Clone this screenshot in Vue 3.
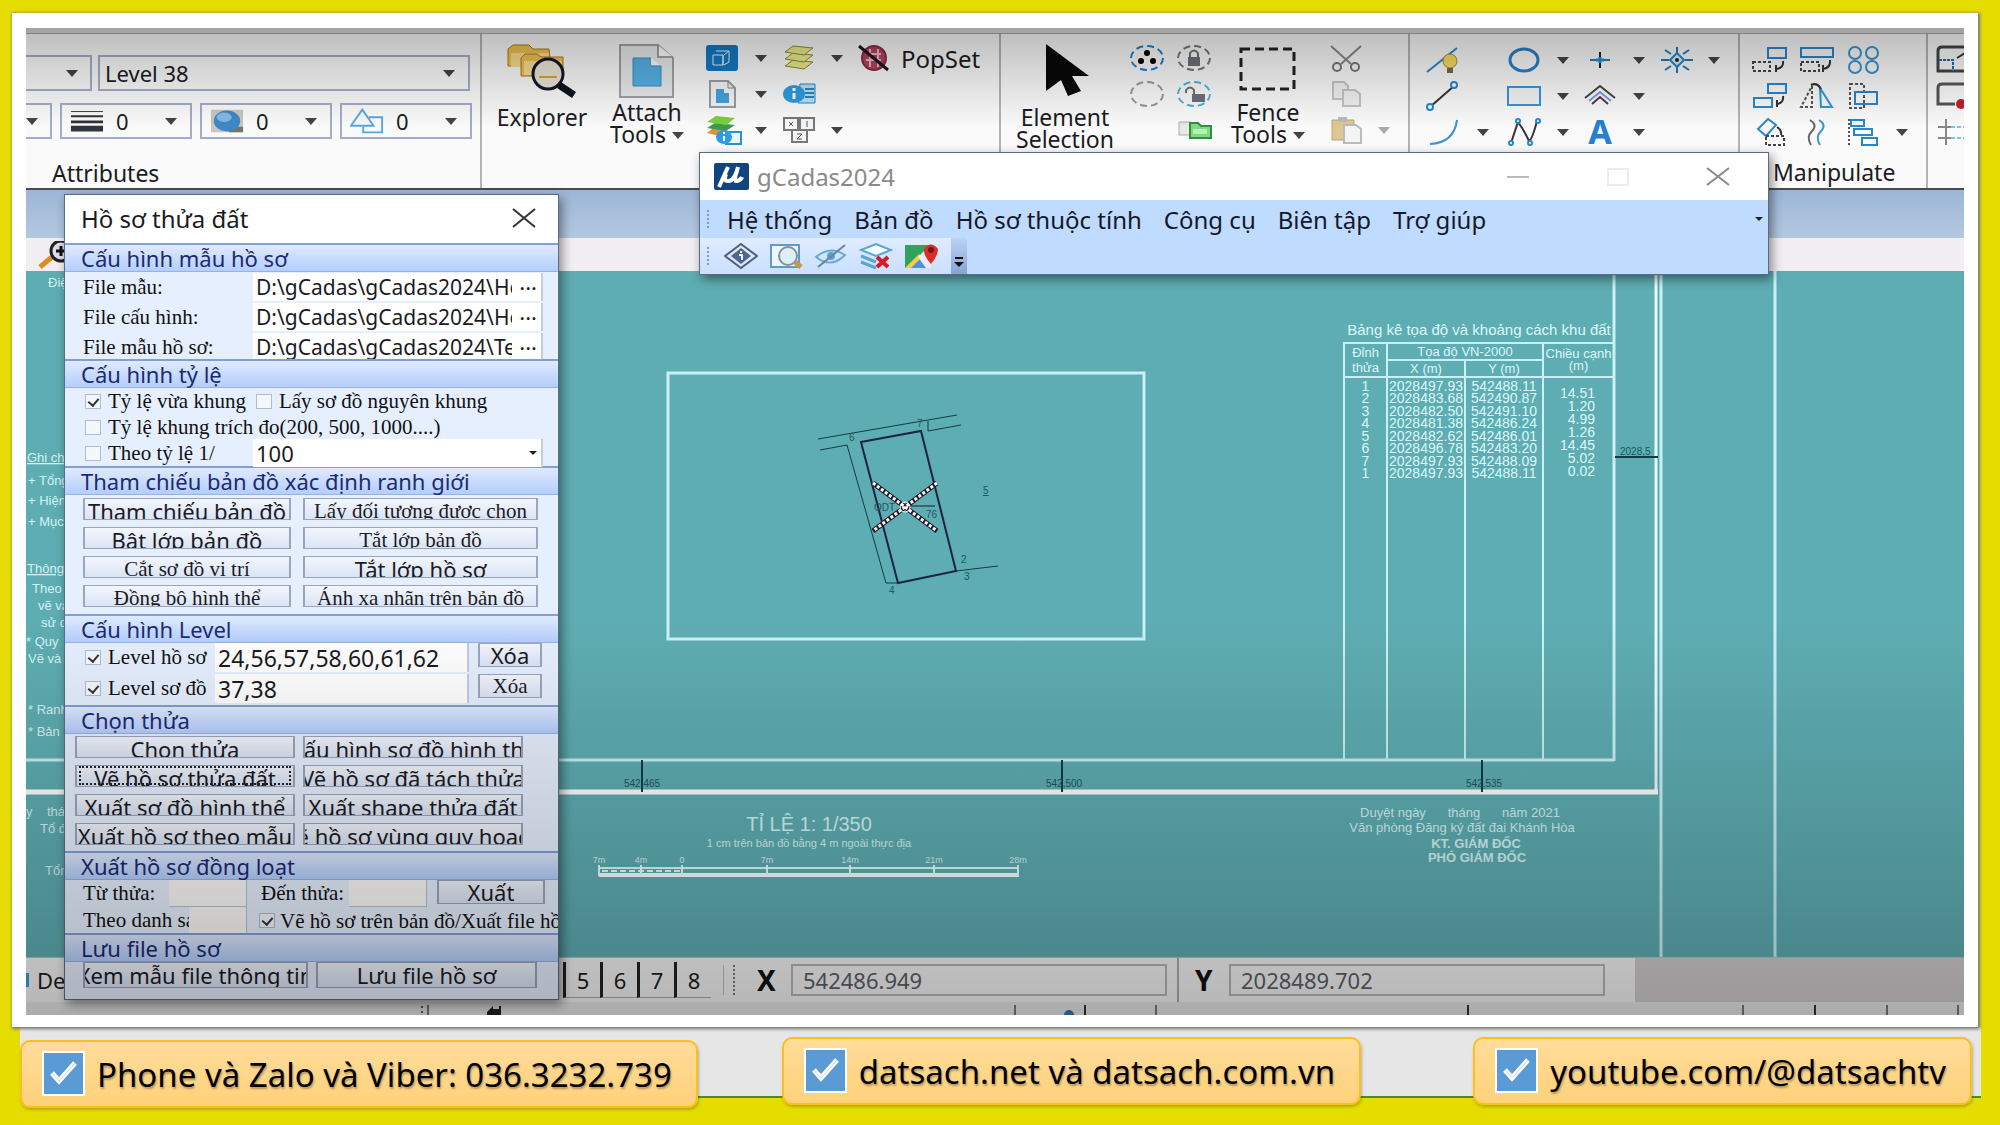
<template>
  <div class="page">
    <main class="frame">
      <div class="app">
        <div class="strip"></div>
        <header class="ribbon">
          <section class="group attributes">
            <div class="combos">
              <label class="combo cut wide"><span class="arr"></span></label>
              <label class="combo level">
                <select aria-label="Level"><option>Level 38</option></select>
                <span class="arr"></span>
              </label>
            </div>
            <div class="combos second">
              <label class="combo cut"><span class="arr"></span></label>
              <label v-for="c in smallCombos" :key="c" class="combo small">
                <svg viewBox="0 0 36 28" v-html="icons[c]"></svg>
                <select :aria-label="c"><option>0</option></select>
                <span class="arr"></span>
              </label>
            </div>
            <h2>Attributes</h2>
          </section>

          <section class="group primary">
            <button class="big explorer">
              <svg viewBox="0 0 70 54" v-html="icons.explorer"></svg>
              <span>Explorer</span>
            </button>
            <button class="big attach">
              <svg viewBox="0 0 70 54" v-html="icons.attach"></svg>
              <span class="tight">Attach<br>Tools <i class="arr"></i></span>
            </button>
            <div class="tools primary-grid">
              <template v-for="(t, i) in primaryTools" :key="i">
                <button v-if="t && t !== 'arr'" class="tool"><svg viewBox="0 0 32 32" v-html="icons[t]"></svg></button>
                <i v-else-if="t" class="arr"></i>
                <i v-else></i>
              </template>
            </div>
            <button class="popset"><svg viewBox="0 0 32 32" v-html="icons.popset"></svg>PopSet</button>
          </section>

          <section class="group selection">
            <button class="big element">
              <svg viewBox="0 0 70 54" v-html="icons.cursor"></svg>
              <span>Element<br>Selection</span>
            </button>
            <div class="tools pair-grid">
              <template v-for="(t, i) in selectTools" :key="i">
                <button v-if="t" class="tool"><svg viewBox="0 0 36 32" v-html="icons[t]"></svg></button>
                <i v-else></i>
              </template>
            </div>
            <button class="big fence">
              <svg viewBox="0 0 70 54" v-html="icons.fence"></svg>
              <span class="tight">Fence<br>Tools <i class="arr"></i></span>
            </button>
            <div class="tools clip-grid">
              <button class="tool"><svg viewBox="0 0 32 32" v-html="icons.cut"></svg></button><i></i>
              <button class="tool"><svg viewBox="0 0 32 32" v-html="icons.copy"></svg></button><i></i>
              <button class="tool"><svg viewBox="0 0 32 32" v-html="icons.paste"></svg></button><i class="arr dim"></i>
            </div>
          </section>

          <section class="group placement">
            <div class="tools place-grid">
              <template v-for="(t, i) in placeTools" :key="i">
                <button v-if="t && t !== 'arr'" class="tool"><svg viewBox="0 0 32 32" v-html="icons[t]"></svg></button>
                <i v-else-if="t" class="arr"></i>
                <i v-else></i>
              </template>
            </div>
          </section>

          <section class="group manipulate">
            <div class="tools manip-grid">
              <template v-for="(t, i) in manipTools" :key="i">
                <button v-if="t && t !== 'arr'" class="tool"><svg viewBox="0 0 36 32" v-html="icons[t]"></svg></button>
                <i v-else-if="t" class="arr"></i>
                <i v-else></i>
              </template>
            </div>
            <h2>Manipulate</h2>
          </section>

          <section class="group modify">
            <div class="tools">
              <button v-for="t in ['mod1', 'mod2', 'mod3']" :key="t" class="tool"><svg viewBox="0 0 32 32" v-html="icons[t]"></svg></button>
            </div>
          </section>
        </header>

        <div class="docbar"></div>
        <div class="viewbar"><svg viewBox="0 0 32 28" v-html="icons.zoom"></svg></div>

        <div class="map">
          <svg class="drawing" viewBox="26 271 1938 686" preserveAspectRatio="xMinYMin slice">
            <g fill="none" stroke="#c9f1f5">
              <rect x="668" y="373" width="476" height="266" stroke-width="3" />
              <path d="M26 760H1614" stroke-width="3" />
              <path d="M1614 271V761M1661 271V957M1775 271V957" stroke-width="3" />
              <path d="M1656 271V792" stroke-width="3" stroke="#eafafc" />
              <path d="M26 792H1658" stroke-width="5" stroke="#fff" />
            </g>
            <g stroke="#123c46" stroke-width="2" fill="none">
              <path d="M642 760V792M1062 760V792M1482 760V792M1613 457H1658" />
              <path d="M861 442L921 431L956 571L898 583Z" stroke="#1d2348" />
              <path d="M818 439L957 415M820 450L847 445L886 583H898M928 421V431L961 425M956 571L998 566" stroke-width="1" />
            </g>
            <path d="M873 483L937 531M937 483L873 531" stroke="#221a2c" stroke-width="5" />
            <path d="M873 483L937 531M937 483L873 531" stroke="#fff" stroke-width="3" stroke-dasharray="3 2" />
            <circle cx="905" cy="507" r="5" fill="none" stroke="#fff" />
            <path d="M910 506H935" stroke="#221a2c" />
            <g class="dark">
              <text x="624" y="787">542,465</text>
              <text x="1046" y="787">542,500</text>
              <text x="1466" y="787">542,535</text>
              <text x="1620" y="455">2028,5</text>
              <text x="849" y="441">6</text>
              <text x="917" y="427">7</text>
              <text x="961" y="563">2</text>
              <text x="964" y="580">3</text>
              <text x="889" y="594">4</text>
              <text x="874" y="511">ODT</text>
              <text x="926" y="518">76</text>
              <text x="983" y="494" text-decoration="underline">5</text>
            </g>
            <g class="light">
              <text x="48" y="287">Điện</text>
              <text x="27" y="462" text-decoration="underline">Ghi chú</text>
              <text x="28" y="485">+ Tổng</text>
              <text x="28" y="505">+ Hiện</text>
              <text x="28" y="526">+ Mục</text>
              <text x="27" y="573" text-decoration="underline">Thông</text>
              <text x="32" y="593">Theo</text>
              <text x="38" y="610">vẽ và</text>
              <text x="41" y="627">sử dụ</text>
              <text x="26" y="646">* Quy</text>
              <text x="28" y="663">Vẽ và</text>
              <text x="28" y="714">* Ranh</text>
              <text x="28" y="736">* Bản</text>
              <text x="26" y="816">y</text>
              <text x="47" y="816">tháng</text>
              <text x="40" y="833">Tổ đo</text>
              <text x="45" y="875">Tổng</text>
            </g>
            <g class="light" text-anchor="middle">
              <text x="809" y="831" class="scale-title">TỈ LỆ 1: 1/350</text>
              <text x="809" y="847" class="mini">1 cm trên bản đồ bằng 4 m ngoài thực địa</text>
              <text v-for="s in scaleMarks" :key="s.x" :x="s.x" y="863" class="tiny">{{ s.t }}</text>
              <text x="1393" y="817">Duyệt ngày</text>
              <text x="1464" y="817">tháng</text>
              <text x="1531" y="817">năm 2021</text>
              <text x="1462" y="832">Văn phòng Đăng ký đất đai Khánh Hòa</text>
              <text x="1476" y="848" class="strong">KT. GIÁM ĐỐC</text>
              <text x="1477" y="862" class="strong">PHÓ GIÁM ĐỐC</text>
            </g>
            <path d="M599 868H1019" stroke="#dff" stroke-width="2" />
            <path d="M599 875H1019" stroke="#fff" stroke-width="4" />
            <path d="M602 871H682" stroke="#e8ffff" stroke-width="2" stroke-dasharray="6 3" />
            <path v-for="s in scaleMarks" :key="'m' + s.x" :d="`M${s.x} 865V876`" stroke="#e8ffff" stroke-width="2" />
          </svg>
          <div class="coords">
            <table>
              <caption>Bảng kê tọa độ và khoảng cách khu đất</caption>
              <thead>
                <tr><th rowspan="2">Đỉnh thửa</th><th colspan="2">Tọa độ VN-2000</th><th rowspan="2">Chiều cạnh (m)</th></tr>
                <tr><th>X (m)</th><th>Y (m)</th></tr>
              </thead>
              <tbody>
                <tr v-for="(r, i) in coords" :key="i">
                  <td>{{ r[0] }}</td><td>{{ r[1] }}</td><td>{{ r[2] }}</td>
                  <td v-if="i === 0" class="sides" rowspan="9"><div v-for="(s, j) in sides" :key="j">{{ s }}</div></td>
                </tr>
                <tr class="filler"><td></td><td></td><td></td></tr>
              </tbody>
            </table>
          </div>
        </div>

        <footer class="status">
          <div class="status-main">
            <span class="desc"><i></i>De</span>
            <div class="views"><button v-for="n in [5, 6, 7, 8]" :key="n">{{ n }}</button></div>
            <i class="grip"></i>
            <label class="axis" for="cx">X</label><input id="cx" v-model="x">
            <i class="sep"></i>
            <label class="axis y" for="cy">Y</label><input id="cy" v-model="y">
          </div>
          <div class="status-rest"></div>
        </footer>
        <div class="ticks">
          <svg viewBox="0 0 1938 13" preserveAspectRatio="xMinYMin slice">
            <path d="M402 3V13M989 3V13M1130 3V13M1717 3V13M1861 3V13M1932 3V13" stroke="#777" stroke-width="2" />
            <path d="M1059 3V13M1789 3V13M1442 3V13" stroke="#333" stroke-width="2" />
            <path d="M396 4v2M396 9v2" stroke="#555" stroke-width="2" />
            <path d="M461 10l6-6v3h6V4h2v9h-14z" fill="#222" />
            <circle cx="1043" cy="13" r="5" fill="#2b79b5" />
          </svg>
        </div>

        <section class="window gcadas">
          <div class="titlebar">
            <svg class="logo" viewBox="0 0 35 27" v-html="icons.mu"></svg>
            <h1>gCadas2024</h1>
            <button aria-label="Minimize"><svg viewBox="0 0 24 24"><path d="M1 12H23" stroke="#bbb" stroke-width="2" /></svg></button>
            <button aria-label="Maximize"><svg viewBox="0 0 24 24"><rect x="2" y="4" width="20" height="16" fill="none" stroke="#ececec" stroke-width="2" /></svg></button>
            <button aria-label="Close"><svg viewBox="0 0 24 24"><path d="M1 3L23 20M23 3L1 20" stroke="#888" stroke-width="2" /></svg></button>
          </div>
          <nav>
            <i class="grip"></i>
            <a v-for="m in menu" :key="m" href="#">{{ m }}</a>
            <i class="arr tiny-arr"></i>
          </nav>
          <div class="iconbar">
            <div class="iconset">
              <i class="grip"></i>
              <button v-for="t in gTools" :key="t"><svg viewBox="0 0 34 28" v-html="icons[t]"></svg></button>
            </div>
            <button class="more"><svg viewBox="0 0 16 36"><path d="M4 20h8" stroke="#111" stroke-width="2" /><path d="M3 24h10l-5 5z" fill="#111" /></svg></button>
          </div>
        </section>

        <section class="window profile">
          <div class="titlebar">
            <h1>Hồ sơ thửa đất</h1>
            <button aria-label="Đóng"><svg viewBox="0 0 24 24"><path d="M1 3L23 21M23 3L1 21" stroke="#333" stroke-width="2" /></svg></button>
          </div>

          <h3>Cấu hình mẫu hồ sơ</h3>
          <div class="files">
            <div v-for="f in files" :key="f.id" class="file">
              <label :for="f.id">{{ f.label }}</label>
              <span class="path"><input :id="f.id" v-model="f.value"><button aria-label="Chọn file">···</button></span>
            </div>
          </div>

          <h3>Cấu hình tỷ lệ</h3>
          <div class="ratio">
            <div class="line">
              <label><input v-model="fit" type="checkbox">Tỷ lệ vừa khung</label>
              <label><input v-model="whole" type="checkbox">Lấy sơ đồ nguyên khung</label>
            </div>
            <div class="line"><label><input v-model="extract" type="checkbox">Tỷ lệ khung trích đo(200, 500, 1000....)</label></div>
            <div class="line">
              <label class="by"><input v-model="custom" type="checkbox">Theo tỷ lệ 1/</label>
              <span class="pick"><select v-model="ratio" aria-label="Tỷ lệ"><option>100</option></select><i class="arr tiny-arr"></i></span>
            </div>
          </div>

          <h3>Tham chiếu bản đồ xác định ranh giới</h3>
          <div class="buttons refs">
            <button v-for="b in refButtons" :key="b.t" :class="{ serif: b.serif }"><span>{{ b.t }}</span></button>
          </div>

          <h3>Cấu hình Level</h3>
          <div class="levels">
            <div class="level-row">
              <label><input v-model="useProfile" type="checkbox">Level hồ sơ</label>
              <input v-model="profileLevels" type="text" aria-label="Level hồ sơ">
              <button class="clear">Xóa</button>
            </div>
            <div class="level-row">
              <label><input v-model="useSketch" type="checkbox">Level sơ đồ</label>
              <input v-model="sketchLevels" type="text" aria-label="Level sơ đồ">
              <button class="clear serif">Xóa</button>
            </div>
          </div>

          <h3>Chọn thửa</h3>
          <div class="buttons parcels">
            <button v-for="b in parcelButtons" :key="b" :class="{ focused: b === 'Vẽ hồ sơ thửa đất' }"><span>{{ b }}</span></button>
          </div>

          <h3>Xuất hồ sơ đồng loạt</h3>
          <div class="batch">
            <div class="batch-row">
              <label class="from" for="from">Từ thửa:</label><input id="from" v-model="from" type="text">
              <label class="to" for="to">Đến thửa:</label><input id="to" v-model="to" type="text">
              <button class="export">Xuất</button>
            </div>
            <div class="batch-row">
              <label class="list" for="list">Theo danh sách</label><input id="list" v-model="list" class="short" type="text">
              <label class="draw"><input v-model="draw" type="checkbox">Vẽ hồ sơ trên bản đồ/Xuất file hồ sơ</label>
            </div>
          </div>

          <h3>Lưu file hồ sơ</h3>
          <div class="save">
            <button class="view"><span>Xem mẫu file thông tin</span></button>
            <button><span>Lưu file hồ sơ</span></button>
          </div>
        </section>

        <div class="shade"></div>
      </div>
    </main>

    <footer class="contacts">
      <a v-for="c in contacts" :key="c" href="#">
        <svg viewBox="0 0 44 46"><rect x="1" y="1" width="41" height="43" fill="#5b9bd5" stroke="#fff" stroke-width="2" /><path d="M10 22l7 8 16-18" fill="none" stroke="#fff" stroke-width="5" /><path d="M10 22l7 8 16-18" fill="none" stroke="#c9d8e8" stroke-width="1" /></svg>
        <span>{{ c }}</span>
      </a>
    </footer>
  </div>
</template>

<script setup>
import { ref, reactive } from 'vue';

const x = ref('542486.949');
const y = ref('2028489.702');
const fit = ref(true);
const whole = ref(false);
const extract = ref(false);
const custom = ref(false);
const ratio = ref('100');
const useProfile = ref(true);
const useSketch = ref(true);
const profileLevels = ref('24,56,57,58,60,61,62');
const sketchLevels = ref('37,38');
const from = ref('');
const to = ref('');
const list = ref('');
const draw = ref(true);

const files = reactive([
  { id: 'f1', label: 'File mẫu:', value: 'D:\\gCadas\\gCadas2024\\HoSo' },
  { id: 'f2', label: 'File cấu hình:', value: 'D:\\gCadas\\gCadas2024\\HoSo' },
  { id: 'f3', label: 'File mẫu hồ sơ:', value: 'D:\\gCadas\\gCadas2024\\Temp' },
]);

const smallCombos = ['weight', 'transparency', 'priority'];
const menu = ['Hệ thống', 'Bản đồ', 'Hồ sơ thuộc tính', 'Công cụ', 'Biên tập', 'Trợ giúp'];
const gTools = ['gInfo', 'gSearch', 'gEye', 'gLayers', 'gMap'];
const contacts = ['Phone và Zalo và Viber: 036.3232.739', 'datsach.net và datsach.com.vn', 'youtube.com/@datsachtv'];

const primaryTools = ['models', 'arr', 'levels', 'arr', 'reference', 'arr', 'props', '', 'levelInfo', 'arr', 'keyin', 'arr'];
const selectTools = ['selAll', 'lock', 'selNone', 'unlock', '', 'group'];
const placeTools = [
  'smartLine', '', 'circle', 'arr', 'point', 'arr', 'star', 'arr',
  'line', '', 'block', 'arr', 'multi', 'arr', '', '',
  'arc', 'arr', 'curve', 'arr', 'text', 'arr', '', '',
];
const manipTools = ['copyEl', 'moveEl', 'array', '', 'scale', 'mirror', 'stretch', '', 'rotate', 'parallel', 'align', 'arr'];

const refButtons = [
  { t: 'Tham chiếu bản đồ' },
  { t: 'Lấy đối tượng được chọn', serif: true },
  { t: 'Bật lớp bản đồ' },
  { t: 'Tắt lớp bản đồ', serif: true },
  { t: 'Cắt sơ đồ vị trí', serif: true },
  { t: 'Tắt lớp hồ sơ' },
  { t: 'Đồng bộ hình thể', serif: true },
  { t: 'Ánh xạ nhãn trên bản đồ', serif: true },
];
const parcelButtons = [
  'Chọn thửa', 'Cấu hình sơ đồ hình thể',
  'Vẽ hồ sơ thửa đất', 'Vẽ hồ sơ đã tách thửa',
  'Xuất sơ đồ hình thể', 'Xuất shape thửa đất',
  'Xuất hồ sơ theo mẫu', 'Vẽ hồ sơ vùng quy hoạch',
];

const coords = [
  ['1', '2028497.93', '542488.11'],
  ['2', '2028483.68', '542490.87'],
  ['3', '2028482.50', '542491.10'],
  ['4', '2028481.38', '542486.24'],
  ['5', '2028482.62', '542486.01'],
  ['6', '2028496.78', '542483.20'],
  ['7', '2028497.93', '542488.09'],
  ['1', '2028497.93', '542488.11'],
];
const sides = ['14.51', '1.20', '4.99', '1.26', '14.45', '5.02', '0.02'];
const scaleMarks = [
  { x: 599, t: '7m' }, { x: 641, t: '4m' }, { x: 682, t: '0' }, { x: 767, t: '7m' },
  { x: 850, t: '14m' }, { x: 934, t: '21m' }, { x: 1018, t: '28m' },
];

const ring = (color) => `<ellipse cx="18" cy="16" rx="16" ry="12" fill="none" stroke="${color}" stroke-width="2" stroke-dasharray="7 4"/>`;

const icons = {
  weight: '<path d="M1 4H35" stroke="#333" stroke-width="1"/><path d="M1 9H35" stroke="#333" stroke-width="2"/><path d="M1 15H35" stroke="#333" stroke-width="3"/><path d="M1 22H35" stroke="#2e3540" stroke-width="6"/>',
  transparency: '<path d="M1 2h34v24H1z" fill="#c9c5bf"/><path d="M18 20h17v6H20z" fill="#77726c"/><ellipse cx="18" cy="14" rx="14" ry="11" fill="#3f88c5"/><ellipse cx="15" cy="10" rx="8" ry="5" fill="#84b9e4"/>',
  priority: '<path d="M20 10h14v16H14v-6" fill="none" stroke="#58a6df" stroke-width="2"/><path d="M13 2L25 19H1z" fill="#f4f6f8" stroke="#58a6df" stroke-width="2"/>',
  explorer: '<path d="M1 22V5l5-4h16l4 4h16l2 17z" fill="#f0c14f" stroke="#a87b1c"/><path d="M4 9h38v14H4z" fill="#fadd8d"/><path d="M14 32V14l4-4h12l4 3h22v19z" fill="#f0c14f" stroke="#a87b1c"/><path d="M17 17h38v14H17z" fill="#fadf93"/><circle cx="41" cy="30" r="15" fill="#ece6d6" stroke="#111827" stroke-width="3"/><path d="M32 33h18" stroke="#d8a93a" stroke-width="2"/><path d="M52 41l15 10" stroke="#0c1220" stroke-width="7"/>',
  attach: '<path d="M8 1h38l15 13v39H8z" fill="#e9eaec" stroke="#a0a2a7" stroke-width="2"/><path d="M46 1v12h15" fill="#fff" stroke="#a0a2a7" stroke-width="2"/><path d="M21 14h18v8h10v20H21z" fill="#56b1e6" stroke="#3691c8"/><path d="M39 14v7h9z" fill="#fff"/>',
  cursor: '<path d="M16 0L59 32H42L51 47L38 52L31 36L16 47z" fill="#080808"/>',
  fence: '<rect x="8" y="5" width="53" height="40" fill="none" stroke="#222" stroke-width="3" stroke-dasharray="9 5"/>',
  models: '<rect x="0" y="3" width="32" height="26" rx="3" fill="#1379c2"/><path d="M7 13h10v10H7zM10 9h13l-5 4M17 13v10M23 9v11l-5 3" fill="none" stroke="#e8f6ff" stroke-width="1"/>',
  levels: '<g fill="#ecec8e" stroke="#8c8c30"><path d="M2 24l8-6 20 2-9 7z"/><path d="M2 17l8-6 20 2-9 7z"/><path d="M2 10l8-6 20 2-9 7z"/></g>',
  popset: '<circle cx="16" cy="16" r="12" fill="#b3435f" stroke="#8b2b45" stroke-width="2"/><path d="M9 12h14M8 18h15M12 7v18M20 7v18" stroke="#efb9c6" stroke-width="2"/><path d="M1 4L30 28" stroke="#1e1420" stroke-width="3"/>',
  reference: '<path d="M4 3h18l7 7v19H4z" fill="#f3f4f5" stroke="#9a9da2" stroke-width="2"/><path d="M22 3v7h7" fill="none" stroke="#84878c"/><path d="M10 11h8v4h5v10H10z" fill="#45a2dd"/>',
  props: '<path d="M17 6h15v19H15z" fill="#b9e0f7" stroke="#2488c9"/><path d="M22 11h9M22 15h9M22 19h9" stroke="#2488c9" stroke-width="2"/><ellipse cx="11" cy="16" rx="11" ry="9" fill="#2f9be0"/><path d="M11 10v3M11 15v6" stroke="#fff" stroke-width="3"/>',
  levelInfo: '<path d="M1 19l6-5 12 3-6 5z" fill="#e0913e"/><path d="M1 14l8-5 20 2-9 6z" fill="#3c9a4a"/><path d="M1 8l9-6 19 2-9 7z" fill="#77cf3f"/><path d="M20 18h15v12H20z" fill="#e7f5fe" stroke="#2b91d4" stroke-width="2"/><ellipse cx="18" cy="23" rx="8" ry="7" fill="#2f9be0"/><path d="M18 18v2M18 22v5" stroke="#fff" stroke-width="2"/>',
  keyin: '<g fill="#f5f5f5" stroke="#777" stroke-width="2"><path d="M1 4h14v12H1zM17 4h14v12H17zM9 16h15v12H9z"/></g><path d="M6 8l4 4M10 8l-4 4M24 7v6M14 20h5l-5 5h5" fill="none" stroke="#555"/>',
  selAll: ring('#1b83cc') + '<circle cx="18" cy="11" r="3"/><circle cx="12" cy="19" r="3"/><circle cx="24" cy="19" r="3"/>',
  selNone: ring('#999'),
  lock: ring('#777') + '<path d="M12 15h12v9H12z" fill="#6a7178"/><path d="M14 15v-4q4-5 8 0v4" fill="none" stroke="#6a7178" stroke-width="2"/>',
  unlock: ring('#54b3e0') + '<path d="M16 16h13v8H16z" fill="#6a7178"/><path d="M18 16v-4q-4-5-8 0v3" fill="none" stroke="#6a7178" stroke-width="2"/>',
  group: '<path d="M3 8h12l3 3v10H3z" fill="#e8e8e8" stroke="#aaa"/><path d="M14 13V9h8l3 3h10v12H14z" fill="#7edb83" stroke="#2f9140" stroke-width="2"/><path d="M17 15h14v5H17z" fill="#b5f0b4"/>',
  cut: '<path d="M1 4l20 18M31 4L11 22" stroke="#888" stroke-width="2"/><circle cx="7" cy="25" r="4" fill="none" stroke="#777" stroke-width="2"/><circle cx="25" cy="25" r="4" fill="none" stroke="#777" stroke-width="2"/>',
  copy: '<g fill="#f0f0f0" stroke="#c4c4c4" stroke-width="2"><path d="M3 4h11l4 4v13H3z"/><path d="M13 12h12l5 4v12H13z"/></g>',
  paste: '<path d="M2 6h22v20H2z" fill="#ddc891" stroke="#b9a877"/><path d="M8 3h9v5H8z" fill="#bbb"/><path d="M14 11h12l5 4v14H14z" fill="#f4f4f4" stroke="#bbb" stroke-width="2"/>',
  smartLine: '<path d="M1 28L31 4" stroke="#2a86cc" stroke-width="2"/><circle cx="24" cy="17" r="7" fill="#f8dc62" stroke="#a98d2a"/><path d="M21 24h6v5h-6z" fill="#776a4a"/>',
  line: '<path d="M4 27L28 6" stroke="#333" stroke-width="2"/><circle cx="4" cy="27" r="3" fill="#fff" stroke="#2a86cc" stroke-width="2"/><circle cx="28" cy="5" r="3" fill="#fff" stroke="#2a86cc" stroke-width="2"/>',
  arc: '<path d="M4 28Q28 27 31 4" fill="none" stroke="#3a95d2" stroke-width="2"/>',
  circle: '<ellipse cx="16" cy="16" rx="14" ry="11" fill="none" stroke="#2a80c5" stroke-width="3"/>',
  block: '<rect x="0" y="7" width="32" height="18" fill="#f1f3f5" stroke="#3a95d8" stroke-width="2"/>',
  curve: '<path d="M3 27L10 6Q16 14 21 25Q24 24 29 5" fill="none" stroke="#333" stroke-width="2"/><g fill="#fff" stroke="#2a86cc" stroke-width="2"><circle cx="3" cy="27" r="2"/><circle cx="10" cy="5" r="2"/><circle cx="22" cy="27" r="2"/><circle cx="30" cy="5" r="2"/></g>',
  point: '<path d="M16 8v16" stroke="#222" stroke-width="2"/><path d="M6 16h20" stroke="#2a78ae" stroke-width="2"/><path d="M12 16h8M16 13v6" stroke="#2490d8" stroke-width="3"/>',
  multi: '<path d="M1 18L16 6L31 18" fill="none" stroke="#444" stroke-width="2"/><path d="M5 21L16 12L27 21" fill="none" stroke="#7c9ce0" stroke-width="2"/><path d="M8 24L16 17L24 24" fill="none" stroke="#553344" stroke-width="2"/>',
  text: '<text x="16" y="28" text-anchor="middle" font-family="Noto Sans, sans-serif" font-size="34" font-weight="700" fill="#2680cd">A</text>',
  star: '<path d="M16 9l7 7-7 7-7-7z" fill="#d9effb" stroke="#2788cc" stroke-width="2"/><circle cx="16" cy="16" r="2" fill="#223"/><path d="M16 3v6M16 23v6M0 16h8M24 16h8M4 6l6 4M28 6l-6 4M4 26l6-4M28 26l-6-4" stroke="#2779b5" stroke-width="2"/>',
  copyEl: '<rect x="16" y="4" width="18" height="10" fill="none" stroke="#2a86cc" stroke-width="2"/><rect x="1" y="18" width="17" height="9" fill="none" stroke="#444" stroke-width="2" stroke-dasharray="3 2"/><path d="M31 17q1 7-7 8m0-4v7" fill="none" stroke="#333" stroke-width="2"/>',
  moveEl: '<rect x="2" y="4" width="32" height="9" fill="none" stroke="#2a86cc" stroke-width="2"/><rect x="2" y="18" width="18" height="9" fill="none" stroke="#444" stroke-width="2" stroke-dasharray="3 2"/><path d="M31 16q1 8-7 9m0-4v7" fill="none" stroke="#333" stroke-width="2"/>',
  array: '<g fill="none" stroke="#3a95d2" stroke-width="2"><circle cx="9" cy="9" r="6"/><circle cx="26" cy="9" r="6"/><circle cx="9" cy="23" r="6"/><circle cx="26" cy="23" r="6"/></g>',
  scale: '<rect x="16" y="4" width="18" height="9" fill="none" stroke="#2a86cc" stroke-width="2"/><rect x="2" y="18" width="18" height="9" fill="none" stroke="#2a86cc" stroke-width="2"/><path d="M31 16q1 7-6 8m0-4v7" fill="none" stroke="#333" stroke-width="2"/>',
  mirror: '<path d="M13 6v21H2z" fill="none" stroke="#555" stroke-width="2" stroke-dasharray="3 2"/><path d="M21 8l12 19H22z" fill="none" stroke="#2a9ad4" stroke-width="2"/><path d="M12 5q6-3 10 4" fill="none" stroke="#333" stroke-width="2"/>',
  stretch: '<path d="M4 4h14v24H4z" fill="none" stroke="#555" stroke-width="2" stroke-dasharray="3 2"/><path d="M9 12h22v12H9z" fill="none" stroke="#2a86cc" stroke-width="2"/>',
  rotate: '<path d="M16 3l8 6-10 11-8-7z" fill="none" stroke="#2a86cc" stroke-width="2"/><path d="M14 20h18v9H14z" fill="none" stroke="#444" stroke-width="2" stroke-dasharray="3 2"/><path d="M25 11q5 3 4 8" fill="none" stroke="#333" stroke-width="2"/>',
  parallel: '<path d="M11 4q8 5 2 11t-1 14" fill="none" stroke="#666" stroke-width="2"/><path d="M20 4q8 5 2 11t-1 14" fill="none" stroke="#3a95d2" stroke-width="2"/>',
  align: '<path d="M3 3v27" stroke="#555" stroke-width="2" stroke-dasharray="2 2"/><g fill="none" stroke="#2a86cc" stroke-width="2"><path d="M5 4h13v6H5zM8 13h18v6H8zM16 22h15v7H16z"/></g>',
  mod1: '<path d="M34 3H5Q1 3 1 7v20h33" fill="none" stroke="#444" stroke-width="3"/><path d="M2 16h14v11" fill="none" stroke="#2a65b5" stroke-width="2" stroke-dasharray="3 1"/><path d="M20 14l8-5" stroke="#333" stroke-width="2"/>',
  mod2: '<path d="M34 4H5Q1 4 1 8v16h17" fill="none" stroke="#555" stroke-width="3"/><circle cx="24" cy="24" r="5" fill="#c0202c"/>',
  mod3: '<path d="M9 3v26M1 11h14M1 22h14" stroke="#888" stroke-width="2"/><path d="M14 11h18M14 22h18" stroke="#7cc4e8" stroke-width="2" stroke-dasharray="4 2"/>',
  zoom: '<path d="M2 26l12-10" stroke="#e08a2a" stroke-width="5"/><circle cx="23" cy="10" r="10" fill="#dde" stroke="#222" stroke-width="3"/><path d="M23 5v10M18 10h10" stroke="#111" stroke-width="3"/>',
  mu: '<rect width="35" height="27" rx="2" fill="#12457f"/><path d="M5 24L14 4M12 11q-3 8 3 7t9-14m-1 4q-4 11 0 10t5-4" fill="none" stroke="#fff" stroke-width="4"/>',
  gInfo: '<path d="M17 2l16 12-16 12L1 14z" fill="#dfe6f2" stroke="#4f5f80" stroke-width="2"/><path d="M17 6l10 8-10 8-10-8z" fill="#4b6796"/><path d="M17 9v2M15 13h3v5" fill="none" stroke="#fff" stroke-width="2"/>',
  gSearch: '<rect x="2" y="3" width="28" height="22" fill="#eef6fd" stroke="#5d9cc7" stroke-width="2"/><circle cx="19" cy="14" r="9" fill="#dfeef8" stroke="#888f98" stroke-width="2"/><path d="M26 20l6 5" stroke="#c59a4a" stroke-width="5"/>',
  gEye: '<path d="M2 15q14-12 29-2-14 14-29 2z" fill="#cfe7f8" stroke="#6aaad4" stroke-width="2"/><circle cx="17" cy="14" r="4" fill="#5aa1d0"/><path d="M4 25L31 3" stroke="#6288a8" stroke-width="2"/>',
  gLayers: '<path d="M2 8l15-6 15 6-15 6z" fill="#f2faff" stroke="#5aa6cf" stroke-width="2"/><path d="M2 14l15 6M2 20l15 6" fill="none" stroke="#5aa6cf" stroke-width="3"/><path d="M18 15l11 10M29 15L18 25" stroke="#d31d25" stroke-width="4"/>',
  gMap: '<path d="M1 3h24v23H1z" fill="#2fa45a"/><path d="M1 26L15 12l14 14z" fill="#f4cf42"/><path d="M7 26l10-10 10 10z" fill="#4f8fe8"/><path d="M14 15l8-8 6 19h-6z" fill="#e9edf0"/><path d="M27 22q-8-9-7-15 7-9 14 0 0 7-7 15z" fill="#d92f2b"/><circle cx="27" cy="8" r="3" fill="#7c1717"/>',
};
</script>

<style>
body {
  background: #e5dd00;
}
</style>

<style scoped>
* {
  box-sizing: border-box;
}

.page {
  min-height: 100vh;
  display: flex;
  flex-direction: column;
  padding: 13px 22px 27px 12px;
  background: #e5dd00;
  font-family: "Noto Sans", "Open Sans", sans-serif;
  font-size: 22px;
  color: #1b1b24;
}

h1,
h2,
h3 {
  margin: 0;
  font-weight: 400;
}

button,
input,
select {
  font: inherit;
  color: inherit;
  margin: 0;
  padding: 0;
  border: none;
  border-radius: 0;
  background: none;
  appearance: none;
  min-width: 0;
}

svg {
  display: block;
  flex: none;
}

.frame {
  flex: 1;
  display: flex;
  padding: 15px 14px 12px 14px;
  background: #fff;
  box-shadow: 1px 1px 3px 1px #777;
  position: relative;
}

.app {
  flex: 1;
  min-width: 0;
  position: relative;
  display: flex;
  flex-direction: column;
  overflow: hidden;
}

.shade {
  position: absolute;
  inset: 0;
  pointer-events: none;
  background:
    linear-gradient(rgba(0, 0, 0, 0.25), transparent 100px),
    linear-gradient(transparent 60%, rgba(0, 0, 0, 0.25));
}

.strip {
  height: 6px;
  background: #d9d9d9;
  border-bottom: 1px solid #a9a9a9;
}

/* ribbon */
.ribbon {
  height: 156px;
  display: flex;
  background: #fafafa;
  border-bottom: 2px solid #4a4a52;
  overflow: hidden;
}

.group {
  flex: none;
  display: flex;
  align-items: flex-start;
  padding-top: 6px;
  border-right: 2px solid #b4b4b8;
}

.group h2 {
  font-size: 23px;
  line-height: 28px;
}

.attributes {
  width: 456px;
  flex-direction: column;
  padding-top: 21px;
}

.attributes h2 {
  padding: 20px 0 0 26px;
}

.combos {
  display: flex;
  gap: 6px;
}

.second {
  gap: 8px;
  margin-top: 12px;
}

.combo {
  height: 36px;
  display: flex;
  align-items: center;
  justify-content: flex-end;
  padding: 0 13px 0 5px;
  border: 2px solid #a3acc9;
}

.combo select {
  flex: 1;
}

.cut {
  border-left: none;
  width: 26px;
  padding-right: 12px;
}

.wide {
  width: 66px;
}

.level {
  width: 372px;
}

.small {
  width: 132px;
}

.small svg {
  width: 34px;
  height: 28px;
  margin: 0 12px 0 3px;
}

.arr {
  display: inline-block;
  flex: none;
  width: 0;
  height: 0;
  border: 6px solid transparent;
  border-top: 7px solid #444;
  border-bottom: none;
}

.dim {
  border-top-color: #aaa;
}

.tiny-arr {
  border-width: 4px 4px 0;
  border-top-color: #222;
}

.big {
  display: flex;
  flex-direction: column;
  align-items: center;
  padding-top: 4px;
  font-size: 23px;
  line-height: 22px;
}

.big svg {
  width: 70px;
  height: 54px;
}

.big span {
  margin-top: 8px;
  white-space: nowrap;
}

.big .tight {
  margin-top: 3px;
}

.tight .arr {
  vertical-align: 4px;
}

.explorer {
  width: 116px;
  padding-left: 4px;
}

.attach {
  width: 98px;
}

.element {
  width: 122px;
  padding-left: 6px;
}

.fence {
  width: 102px;
}

.tools {
  display: grid;
  grid-auto-rows: 36px;
  align-items: center;
  justify-items: center;
}

.tool svg {
  width: 32px;
  height: 32px;
  overflow: visible;
}

.primary {
  width: 519px;
}

.primary-grid {
  grid-template-columns: 52px 26px 50px 26px;
}

.popset {
  display: flex;
  align-items: center;
  gap: 11px;
  height: 36px;
  margin-left: 8px;
  font-size: 24px;
}

.popset svg {
  width: 32px;
  height: 32px;
}

.selection {
  width: 409px;
}

.pair-grid {
  grid-template-columns: 48px 46px;
}

.clip-grid {
  grid-template-columns: 54px 22px;
}

.pair-grid svg,
.manip-grid svg {
  width: 36px;
}

.placement {
  width: 330px;
  padding-top: 8px;
}

.place-grid {
  grid-template-columns: 64px 18px 64px 14px 60px 18px 58px 16px;
}

.manipulate {
  width: 188px;
  padding: 8px 0 0 6px;
  flex-direction: column;
}

.manipulate h2 {
  padding: 8px 0 0 27px;
}

.manip-grid {
  grid-template-columns: 47px 47px 48px 28px;
}

.modify {
  flex: 1;
  min-width: 0;
  padding: 8px 0 0 14px;
  border: none;
  overflow: hidden;
}

.docbar {
  height: 48px;
  background: linear-gradient(#9db6d6, #b4c8e0);
}

.viewbar {
  height: 33px;
  padding: 3px 12px;
  background: #f1eff2;
}

.viewbar svg {
  width: 32px;
  height: 28px;
}

/* map */
.map {
  flex: 1;
  min-height: 0;
  position: relative;
  overflow: hidden;
  background: #5eadb2;
}

.drawing {
  position: absolute;
  inset: 0;
  width: 100%;
  height: 100%;
}

.light,
.dark {
  font-family: "Liberation Sans", Arial, sans-serif;
  font-size: 13px;
  fill: #d3f3f5;
}

.dark {
  font-size: 10px;
  fill: #1c5860;
}

.scale-title {
  font-size: 20px;
}

.mini {
  font-size: 11px;
}

.tiny {
  font-size: 9px;
}

.strong {
  font-weight: 700;
}

.coords {
  position: absolute;
  left: 1317px;
  top: 46px;
  width: 272px;
  font: 14px/12px "Liberation Sans", Arial, sans-serif;
  color: #dcf8fa;
}

.coords table {
  width: 100%;
  height: 418px;
  border-collapse: collapse;
  table-layout: fixed;
  border: solid #c9f1f5;
  border-width: 2px 0 0 2px;
}

.coords caption {
  font-size: 15px;
  line-height: 25px;
  white-space: nowrap;
}

.coords th,
.coords td {
  padding: 0;
  font-weight: 400;
  text-align: center;
  border-right: 2px solid #c9f1f5;
}

.coords th {
  height: 17px;
  font-size: 13px;
  border-bottom: 2px solid #c9f1f5;
}

.coords th:nth-child(1)[rowspan] {
  width: 43px;
  line-height: 15px;
}

.coords th:nth-child(2)[colspan] {
  width: 156px;
}

.coords tbody tr {
  height: 12px;
}

.coords tbody tr:nth-child(odd) {
  height: 13px;
}

.coords tbody tr:first-child {
  height: 15px;
  vertical-align: bottom;
}

.coords tbody tr.filler {
  height: auto;
}

.coords .sides {
  vertical-align: top;
  padding: 9px 18px 0 0;
  line-height: 13px;
  text-align: right;
}

/* status */
.status {
  height: 45px;
  display: flex;
  border-top: 1px solid #a8c8cc;
}

.status-main {
  width: 83%;
  display: flex;
  align-items: center;
  background: #f4f3f3;
}

.status-rest {
  flex: 1;
  background: #cfcacc;
}

.desc {
  width: 537px;
  display: flex;
  align-items: center;
  gap: 8px;
}

.desc i {
  width: 3px;
  height: 14px;
  background: #3b9cd8;
}

.views {
  display: flex;
}

.views button {
  width: 37px;
  height: 36px;
  border-left: 3px solid #222;
  border-bottom: 1px solid #aaa;
}

.grip {
  width: 12px;
  height: 30px;
  border-left: 1px solid #bbb;
  border-right: 2px dotted #777;
}

.status .grip {
  margin: 0 22px 0 12px;
}

.axis {
  width: 34px;
  font-size: 28px;
  font-weight: 700;
  color: #111;
}

.status input {
  width: 376px;
  height: 32px;
  padding-left: 10px;
  border: 2px solid #b5b5b8;
  color: #5c5f66;
}

.sep {
  width: 2px;
  height: 44px;
  margin: 0 16px 0 10px;
  background: #aaa;
}

.ticks {
  height: 13px;
  background: #e6e6e6;
}

.ticks svg {
  width: 100%;
  height: 13px;
}

/* windows */
.window {
  position: absolute;
  border: 1px solid #5c6c80;
  box-shadow: 3px 4px 10px rgba(0, 0, 0, 0.45);
}

.titlebar {
  display: flex;
  align-items: center;
  background: #fff;
}

.titlebar h1 {
  flex: 1;
  font-size: 24px;
}

.titlebar button svg {
  width: 24px;
  height: 24px;
}

.gcadas {
  left: 673px;
  top: 124px;
  width: 1070px;
  background: #bfdbff;
}

.gcadas .titlebar {
  height: 47px;
  gap: 76px;
  padding: 0 38px 0 14px;
}

.gcadas h1 {
  margin-left: -68px;
  color: #8a8a8a;
}

.logo {
  width: 35px;
  height: 27px;
}

nav {
  height: 38px;
  display: flex;
  align-items: center;
  gap: 22px;
  padding: 0 5px;
  font-size: 24px;
}

nav a {
  color: #14182a;
  text-decoration: none;
}

nav .tiny-arr {
  margin-left: auto;
}

.window .grip {
  width: 4px;
  height: 18px;
  border-left: none;
  border-right: 2px dotted #8799b8;
}

nav .grip {
  margin-right: -4px;
}

.iconbar {
  height: 36px;
  display: flex;
}

.iconset {
  display: flex;
  align-items: center;
  gap: 11px;
  padding: 0 13px 0 5px;
  background: linear-gradient(#e0ecff, #cadfff);
}

.iconset .grip {
  margin-right: 4px;
}

.iconset svg {
  width: 34px;
  height: 28px;
}

.more {
  width: 16px;
  background: linear-gradient(#bcd3f5, #86a3d2);
}

.more svg {
  width: 16px;
  height: 36px;
}

.profile {
  left: 38px;
  top: 166px;
  width: 495px;
  overflow: hidden;
  background: #e6effe;
}

.profile .titlebar {
  height: 48px;
  padding: 0 22px 2px 16px;
}

.profile h3 {
  height: 29px;
  padding-left: 16px;
  font-size: 22px;
  line-height: 27px;
  color: #1c2a72;
  background: linear-gradient(#dfeaff, #b4cefc);
  border-top: 2px solid #7f9fd6;
  border-bottom: 1px solid #98b2e4;
}

.profile label {
  font-family: "Liberation Serif", "Times New Roman", serif;
  font-size: 21px;
  color: #111;
  white-space: nowrap;
}

.files {
  height: 87px;
  overflow: hidden;
}

.file {
  display: flex;
  align-items: center;
  height: 30px;
  padding-left: 18px;
}

.file label {
  width: 170px;
}

.path,
.pick {
  display: flex;
  align-items: center;
  width: 290px;
  height: 28px;
  padding-right: 4px;
  background: #fff;
  border-right: 2px solid #c3cde0;
}

.path input {
  width: 256px;
  margin-left: 3px;
  font-size: 21px;
}

.path button {
  flex: 1;
  text-align: right;
  line-height: 20px;
}

.line {
  display: flex;
  align-items: center;
  height: 26px;
  gap: 10px;
  padding-left: 20px;
}

.line label,
.level-row label,
.draw {
  display: flex;
  align-items: center;
}

input[type="checkbox"] {
  flex: none;
  width: 16px;
  height: 15px;
  margin-right: 7px;
  border: 1px solid #b3bccb;
  background: #f4f7fc;
}

input[type="checkbox"]:checked::before {
  content: "";
  display: block;
  width: 5px;
  height: 8px;
  margin: 1px 0 0 4px;
  border: solid #333;
  border-width: 0 2px 2px 0;
  transform: rotate(40deg);
}

.ratio .by {
  width: 158px;
}

.pick select {
  flex: 1;
  padding-left: 3px;
}

.buttons {
  display: grid;
  grid-auto-rows: 22px;
  gap: 7px 12px;
}

.refs {
  grid-template-columns: 208px 235px;
  padding: 3px 0 7px 18px;
}

.parcels {
  grid-template-columns: 220px 220px;
  column-gap: 8px;
  padding: 2px 0 6px 10px;
}

.buttons button,
.save button,
.clear,
.export {
  display: flex;
  justify-content: center;
  align-items: flex-start;
  overflow: hidden;
  white-space: nowrap;
  line-height: 24px;
  background: linear-gradient(#f3f6fd, #dbe4f5);
  border: 1px solid #9aa6bd;
  border-width: 1px 2px;
}

.profile .serif {
  font-family: "Liberation Serif", "Times New Roman", serif;
  font-size: 21px;
}

.focused span {
  width: 212px;
  height: 19px;
  text-align: center;
  outline: 2px dotted #222;
  outline-offset: -2px;
}

.levels {
  height: 62px;
}

.level-row {
  display: flex;
  align-items: flex-start;
  height: 31px;
  padding-left: 20px;
}

.level-row label {
  width: 130px;
  height: 29px;
}

.level-row input[type="text"] {
  width: 254px;
  height: 29px;
  padding-left: 3px;
  margin-right: 9px;
  font-size: 23px;
  background: #fff;
  border-right: 2px solid #c3cde0;
}

.clear {
  width: 64px;
  height: 24px;
}

.levels .clear,
.batch .export {
  line-height: 22px;
}

.batch {
  height: 53px;
  overflow: hidden;
}

.batch-row {
  display: flex;
  height: 27px;
  padding-left: 18px;
  line-height: 26px;
}

.batch-row input[type="text"] {
  flex: none;
  width: 78px;
  background: #fbfaf8;
  border: solid #b9c2d2;
  border-width: 0 1px 1px 0;
}

.from {
  width: 86px;
}

.to {
  width: 88px;
  margin-left: 14px;
}

.list {
  flex: none;
  width: 106px;
  overflow: hidden;
}

.batch-row input.short[type="text"] {
  width: 58px;
  margin-right: 12px;
}

.export {
  width: 108px;
  height: 24px;
  margin-left: 10px;
}

.draw input[type="checkbox"] {
  margin-right: 5px;
}

.save {
  display: grid;
  grid-template-columns: 225px 221px;
  gap: 8px;
  padding: 0 0 11px 18px;
}

.save button {
  height: 26px;
}

/* contacts */
.contacts {
  display: flex;
  align-items: flex-start;
  height: 71px;
  margin: 0 -3px 0 8px;
  padding: 10px 9px 0 0;
  background: #e6e6e6;
  border-bottom: 2px solid #4b8a2c;
}

.contacts a {
  display: flex;
  align-items: center;
  gap: 11px;
  height: 68px;
  flex: none;
  padding: 0 24px 0 20px;
  border: 2px solid #fdbf1c;
  border-radius: 10px;
  background: linear-gradient(#ffdc9b, #ffd27a);
  box-shadow: 1px 2px 3px rgba(60, 60, 0, 0.3);
  color: #000;
  font-size: 33px;
  text-decoration: none;
  text-shadow: 1px 2px 2px rgba(0, 0, 0, 0.3);
}

.contacts a:nth-child(1) {
  margin-top: 3px;
}

.contacts a:nth-child(2) {
  margin-left: 84px;
}

.contacts a:nth-child(3) {
  margin-left: auto;
}

.contacts svg {
  width: 44px;
  height: 46px;
}
</style>
